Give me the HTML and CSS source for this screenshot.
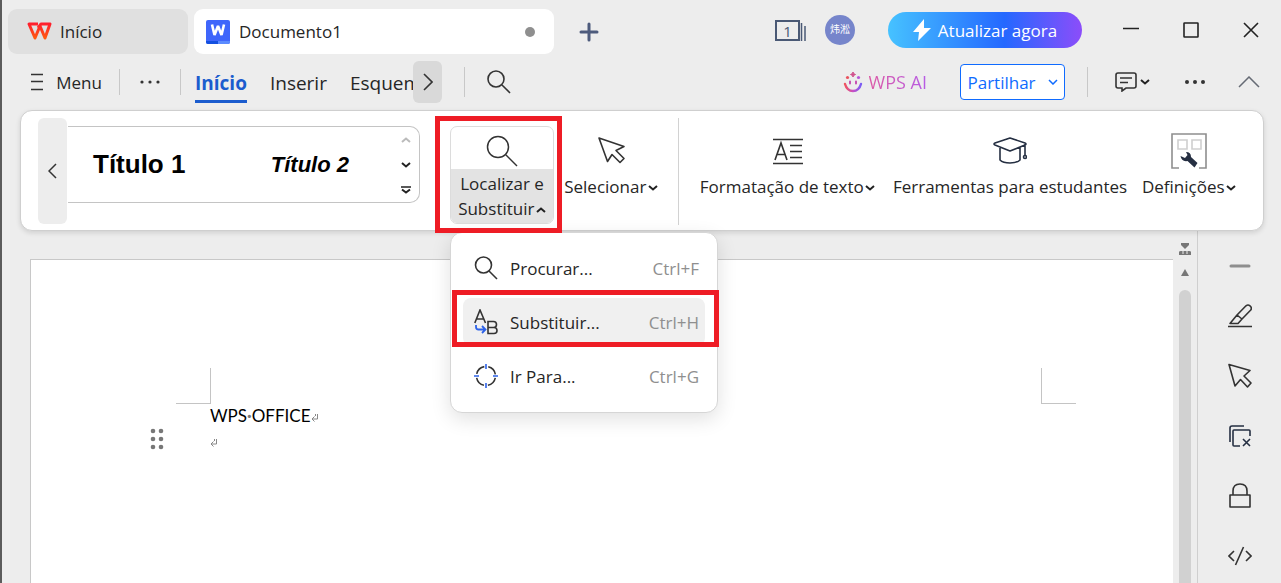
FILE: index.html
```html
<!DOCTYPE html>
<html lang="pt">
<head>
  <meta charset="UTF-8" />
  <meta name="viewport" content="width=device-width, initial-scale=1.0" />
  <title>Documento1 - WPS Office</title>
  <link rel="stylesheet" href="styles.css">
</head>
<body>

  <!-- Title bar -->
  <header class="title-bar">
    <button class="doc-tab home-tab">
      <svg width="26" height="20" viewBox="0 0 26 20"><defs><linearGradient id="wps" x1="0" y1="0" x2="0" y2="1"><stop offset="0" stop-color="#ff1f2d"/><stop offset="1" stop-color="#ff5a10"/></linearGradient></defs><path d="M12 2H3l6 14 5-12 5 12 5-14h-9l-3 4" fill="none" stroke="url(#wps)" stroke-width="3" stroke-linejoin="round"/></svg>
      <span>Início</span>
    </button>
    <button class="doc-tab active">
      <svg width="24" height="24" viewBox="0 0 24 24"><rect width="24" height="24" rx="2" fill="#3f66fb"/><path d="M0 21h12v3H2a2 2 0 0 1-2-2z" fill="#1450e0"/><path d="M12 21h12v1a2 2 0 0 1-2 2H12z" fill="#5b8bff"/><path d="M6 4.500L8.500 15 12 6l3.500 9L18 4.500" fill="none" stroke="#fff" stroke-width="2.600" stroke-linejoin="bevel"/></svg>
      <span>Documento1</span>
      <i class="unsaved"></i>
    </button>
    <button class="new-tab" aria-label="Novo separador">
      <svg width="20" height="20" viewBox="0 0 20 20"><path d="M10 2v16M2 10h16" stroke="#4d5b7c" stroke-width="3" stroke-linecap="round"/></svg>
    </button>
    <button class="windows-count" aria-label="Janelas">
      <span>1</span>
      <svg width="6" height="21" viewBox="0 0 6 21"><path d="M1.500 3v18M5 6v15" stroke="#4a5975" stroke-width="1.500"/></svg>
    </button>
    <span class="avatar">炜淞</span>
    <button class="upgrade">
      <svg width="18" height="22" viewBox="0 0 18 22"><path d="M11 0L0 13h6l-1 9L18 9h-7z" fill="#fff"/></svg>
      Atualizar agora
    </button>
    <div class="window-controls">
      <button aria-label="Minimizar"><svg width="16" height="16" viewBox="0 0 16 16"><path d="M0 6.500h16" stroke="#222" stroke-width="1.500"/></svg></button>
      <button aria-label="Maximizar"><svg width="16" height="16" viewBox="0 0 16 16"><rect x="1" y="1" width="14" height="14" rx="0.500" fill="none" stroke="#222" stroke-width="1.600"/></svg></button>
      <button aria-label="Fechar"><svg width="16" height="16" viewBox="0 0 16 16"><path d="M1 1l14 14M15 1L1 15" stroke="#222" stroke-width="1.600"/></svg></button>
    </div>
  </header>

  <!-- Menu bar -->
  <div class="menu-bar">
    <button class="menu-btn">
      <svg width="14" height="18" viewBox="0 0 14 18"><path d="M1 1.500h12M1 8.500h12M1 16.500h12" stroke="#333" stroke-width="1.500"/></svg>
      Menu
    </button>
    <i class="divider"></i>
    <button class="dots" aria-label="Mais"><svg width="20" height="6" viewBox="0 0 20 6"><g fill="#333"><circle cx="2" cy="3" r="1.600"/><circle cx="10" cy="3" r="1.600"/><circle cx="18" cy="3" r="1.600"/></g></svg></button>
    <i class="divider"></i>
    <nav class="ribbon-tabs">
      <a href="#" class="active">Início</a>
      <a href="#">Inserir</a>
      <a href="#">Esquem</a>
    </nav>
    <button class="tabs-next" aria-label="Seguinte"><svg width="10" height="18" viewBox="0 0 10 18"><path d="M1 1l8 8-8 8" fill="none" stroke="#333" stroke-width="1.600"/></svg></button>
    <i class="divider tall"></i>
    <button class="search-btn" aria-label="Procurar"><svg width="24" height="24" viewBox="0 0 24 24"><g fill="none" stroke="#333" stroke-width="1.600"><circle cx="9" cy="9" r="8"/><path d="M15 15l8 8"/></g></svg></button>

    <button class="wps-ai">
      <svg width="20" height="22" viewBox="0 0 20 22"><defs><linearGradient id="ai"><stop offset="0" stop-color="#f0525e"/><stop offset="0.500" stop-color="#c750c4"/><stop offset="1" stop-color="#7a5cf5"/></linearGradient></defs><path d="M2 13q2 7 8 7t8-7" fill="none" stroke="url(#ai)" stroke-width="2.400" stroke-linecap="round"/><path d="M7 10.500v2M13 10.500v2" stroke="#c750b4" stroke-width="2" stroke-linecap="round"/><path d="M10 1l.8 1.700L12.500 3.500l-1.700.8L10 6l-.8-1.700-1.700-.8 1.700-.8z" fill="#d0508c" stroke="#d0508c"/><circle cx="4.500" cy="6.500" r="1.600" fill="#e8525e"/><circle cx="15.500" cy="6.500" r="1.600" fill="#b758d8"/></svg>
      <span>WPS AI</span>
    </button>
    <button class="share">
      Partilhar
      <svg width="10" height="6" viewBox="0 0 10 6"><path d="M1 1l4 4 4-4" fill="none" stroke="#0f6bff" stroke-width="1.500"/></svg>
    </button>
    <i class="divider tall"></i>
    <button class="comments" aria-label="Comentários">
      <svg width="22" height="20" viewBox="0 0 22 20"><path d="M3 1h16a2 2 0 0 1 2 2v11a2 2 0 0 1-2 2h-8l-4 3v-3H3a2 2 0 0 1-2-2V3a2 2 0 0 1 2-2zM5 6h12M5 10.500h8" fill="none" stroke="#333" stroke-width="1.600"/></svg>
      <svg width="10" height="6" viewBox="0 0 10 6"><path d="M1 1l4 3.500L9 1" fill="none" stroke="#222" stroke-width="2"/></svg>
    </button>
    <button class="more" aria-label="Mais opções"><svg width="20" height="6" viewBox="0 0 20 6"><g fill="#333"><circle cx="2" cy="3" r="2"/><circle cx="10" cy="3" r="2"/><circle cx="18" cy="3" r="2"/></g></svg></button>
    <button class="collapse" aria-label="Recolher friso"><svg width="22" height="12" viewBox="0 0 22 12"><path d="M1 11L11 1l10 10" fill="none" stroke="#666b75" stroke-width="1.500"/></svg></button>
  </div>

  <!-- Ribbon -->
  <section class="ribbon">
    <button class="ribbon-prev" aria-label="Anterior"><svg width="9" height="16" viewBox="0 0 9 16"><path d="M8 1L1 8l7 7" fill="none" stroke="#333" stroke-width="1.500"/></svg></button>
    <div class="styles-gallery">
      <button class="style-one">Título 1</button>
      <button class="style-two">Título 2</button>
      <div class="gallery-scroll">
        <button aria-label="Acima"><svg width="10" height="6" viewBox="0 0 10 6"><path d="M1 5l4-3.500L9 5" fill="none" stroke="#bbb" stroke-width="2"/></svg></button>
        <button aria-label="Abaixo"><svg width="10" height="6" viewBox="0 0 10 6"><path d="M1 1l4 3.500L9 1" fill="none" stroke="#222" stroke-width="2"/></svg></button>
        <button aria-label="Todos os estilos"><svg width="10" height="8" viewBox="0 0 10 8"><path d="M0 1h10" stroke="#222" stroke-width="1.500"/><path d="M1 3.500l4 3 4-3" fill="none" stroke="#222" stroke-width="2"/></svg></button>
      </div>
    </div>

    <div class="find-group">
      <button class="find-btn">
        <span class="find-icon"><svg width="32" height="32" viewBox="0 0 32 32"><g fill="none" stroke="#333" stroke-width="1.500"><circle cx="12" cy="12" r="10.500"/><path d="M19.500 19.500L31 31"/></g></svg></span>
        <span class="find-label">Localizar e<br>Substituir <svg width="10" height="6" viewBox="0 0 10 6"><path d="M1 5l4-3.500L9 5" fill="none" stroke="#222" stroke-width="2"/></svg></span>
      </button>
      <i class="mark mark-group"></i>

      <!-- Dropdown -->
      <div class="dropdown">
        <button class="option">
          <svg width="24" height="24" viewBox="0 0 24 24"><g fill="none" stroke="#333" stroke-width="1.600"><circle cx="9.500" cy="9" r="8"/><path d="M15 15l8 8"/></g></svg>
          <span>Procurar...</span><kbd>Ctrl+F</kbd>
        </button>
        <button class="option selected">
          <svg width="24" height="26" viewBox="0 0 24 26"><g fill="none" stroke="#333" stroke-width="1.600"><path d="M.8 14L6 1l5.500 13M2.500 10h7"/><path d="M14 12.500h5.500a3 3 0 0 1 0 6H14zM14 18.500h6a3 3 0 0 1 0 6h-6z"/></g><path d="M2 16v2a2.500 2.500 0 0 0 2.500 2.500H11M8 17l3.500 3.500L8 24" fill="none" stroke="#2d62e8" stroke-width="1.800"/></svg>
          <span>Substituir...</span><kbd>Ctrl+H</kbd>
          <i class="mark mark-option"></i>
        </button>
        <button class="option">
          <svg width="24" height="24" viewBox="0 0 24 24"><circle cx="12" cy="12" r="9.500" fill="none" stroke="#333" stroke-width="1.600" stroke-dasharray="10.900 4.020" stroke-dashoffset="-2"/><path d="M12 0v5M12 19v5M0 12h5M19 12h5" stroke="#2d62e8" stroke-width="1.600"/></svg>
          <span>Ir Para...</span><kbd>Ctrl+G</kbd>
        </button>
      </div>
    </div>

    <button class="tool select-tool">
      <svg width="30" height="32" viewBox="0 0 30 32"><path d="M3 3l25 8.500-8 4 8 8-4 4-8-8-4.500 7z" fill="none" stroke="#333" stroke-width="1.600" stroke-linejoin="round"/></svg>
      <span>Selecionar <svg width="10" height="6" viewBox="0 0 10 6"><path d="M1 1l4 3.500L9 1" fill="none" stroke="#222" stroke-width="2"/></svg></span>
    </button>
    <i class="ribbon-divider"></i>
    <button class="tool format-tool">
      <svg width="30" height="32" viewBox="0 0 30 32"><path d="M0 4.500h30M0 28.500h30M17 10.500h12M17 16.500h12M17 22.500h12M2 25L8 8l6 17M4 19.500h8" fill="none" stroke="#333" stroke-width="1.600"/></svg>
      <span>Formatação de texto <svg width="10" height="6" viewBox="0 0 10 6"><path d="M1 1l4 3.500L9 1" fill="none" stroke="#222" stroke-width="2"/></svg></span>
    </button>
    <button class="tool student-tool">
      <svg width="34" height="32" viewBox="0 0 34 32"><g fill="none" stroke="#252f42" stroke-width="1.600" stroke-linejoin="round"><path d="M17 3l15 5q2 1 0 2l-15 6L2 10q-2-1 0-2zM7 12v13q3 3 10 3t10-3V12M32 9v11"/><circle cx="32" cy="22" r="1.500"/></g></svg>
      <span>Ferramentas para estudantes</span>
    </button>
    <button class="tool settings-tool">
      <svg width="36" height="36" viewBox="0 0 36 36"><g fill="none" stroke="#8e8e8e" stroke-width="1.600"><path d="M8 35H1V1h34v34h-7"/><path d="M7 7h9v9H7zM21 7h9v9h-9z" stroke="#cfcfcf"/></g><path d="M15 19q5 0 5 5l6.500 6-3 4.500-7-6.500q-6 1-7-5l4.500 2 2.500-3z" fill="#252f42"/></svg>
      <span>Definições <svg width="10" height="6" viewBox="0 0 10 6"><path d="M1 1l4 3.500L9 1" fill="none" stroke="#222" stroke-width="2"/></svg></span>
    </button>
  </section>

  <!-- Document -->
  <main class="workspace">
    <article class="paper">
      <svg class="drag-handle" width="14" height="22" viewBox="0 0 14 22"><g fill="#777"><circle cx="3" cy="3" r="2.300"/><circle cx="11" cy="3" r="2.300"/><circle cx="3" cy="11" r="2.300"/><circle cx="11" cy="11" r="2.300"/><circle cx="3" cy="19" r="2.300"/><circle cx="11" cy="19" r="2.300"/></g></svg>
      <div class="margins">
        <i class="corner corner-left"></i>
        <i class="corner corner-right"></i>
      </div>
      <div class="doc-text">
        <p>WPS<span class="space-dot">·</span>OFFICE<svg width="8" height="8" viewBox="0 0 8 8"><path d="M6.500 0v5H1M3.500 2.500L1 5l2.500 2.500M4.500 0v2" fill="none" stroke="#888"/></svg></p>
        <p><svg width="8" height="8" viewBox="0 0 8 8"><path d="M6.500 0v5H1M3.500 2.500L1 5l2.500 2.500M4.500 0v2" fill="none" stroke="#888"/></svg></p>
      </div>
    </article>

    <div class="scrollbar">
      <svg width="12" height="12" viewBox="0 0 12 12"><path d="M2 0h8v2L6 6 2 2zM0 12V9q0-1 2-1h8q2 0 2 1v3z" fill="#777"/><path d="M4 8v3M8 8v3" stroke="#eee"/></svg>
      <svg width="8" height="7" viewBox="0 0 8 7"><path d="M4 0l4 7H0z" fill="#777"/></svg>
      <i class="thumb"></i>
    </div>

    <aside class="side-bar">
      <button class="side-min" aria-label="Minimizar painel"><svg width="22" height="4" viewBox="0 0 22 4"><path d="M2 2h18" stroke="#8e8e8e" stroke-width="3" stroke-linecap="round"/></svg></button>
      <button aria-label="Editar"><svg width="24" height="24" viewBox="0 0 24 24"><g fill="none" stroke="#333" stroke-width="1.600" stroke-linejoin="round"><path d="M0 22.500h24M2 19.500L9 11 18 1.800q2-1.500 4 0t1 4L14 15l-4 4.500zM9 11l5 4"/></g></svg></button>
      <button aria-label="Selecionar"><svg width="24" height="26" viewBox="0 0 24 26"><path d="M1 1.500l21 6-6 5.500 7 7-3.500 4-7-7.500L7 23z" fill="none" stroke="#333" stroke-width="1.600" stroke-linejoin="round"/></svg></button>
      <button aria-label="Limpar"><svg width="22" height="22" viewBox="0 0 22 22"><g fill="none" stroke="#252f42" stroke-width="1.600"><path d="M1 17V3q0-2 2-2h12M11 21H5q-1 0-1-1V6q0-1 1-1h15q1 0 1 1v5M14 14l7 7M21 14l-7 7"/></g></svg></button>
      <button aria-label="Proteger"><svg width="22" height="26" viewBox="0 0 22 26"><path d="M1 12h20v12H1zM4 12V8q0-7 7-7t7 7v4" fill="none" stroke="#333" stroke-width="1.600" stroke-linejoin="round"/></svg></button>
      <button aria-label="Código"><svg width="24" height="20" viewBox="0 0 24 20"><path d="M6 5l-5 5 5 5M18 5l5 5-5 5M15.500 1l-8 18" fill="none" stroke="#333" stroke-width="1.600"/></svg></button>
    </aside>
  </main>

</body>
</html>
```
FILE: styles.css
```css
* {
  margin: 0;
  padding: 0;
  box-sizing: border-box;
}

body {
  height: 100vh;
  display: flex;
  flex-direction: column;
  overflow: hidden;
  background: #ededed;
  border-left: 2px solid #5c5c5c;
  color: #262626;
  font-family: 'Open Sans', 'Noto Sans', 'Noto Sans CJK SC', sans-serif;
  font-size: 17px;
}

button {
  display: flex;
  align-items: center;
  justify-content: center;
  flex-shrink: 0;
  border: none;
  background: none;
  color: inherit;
  font: inherit;
  white-space: nowrap;
  cursor: pointer;
}

svg {
  flex-shrink: 0;
}

/* ========== Title bar ========== */
.title-bar {
  display: flex;
  align-items: center;
  height: 60px;
  padding: 3px 0 0 6px;
}

.doc-tab {
  height: 45px;
  border-radius: 9px;
  justify-content: flex-start;
}

.home-tab {
  width: 180px;
  padding-left: 18px;
  gap: 8px;
  background: #e0e0e0;
}

.doc-tab.active {
  width: 360px;
  margin-left: 6px;
  padding: 0 19px 0 12px;
  gap: 9px;
  background: #fff;
}

.unsaved {
  width: 10px;
  height: 10px;
  margin-left: auto;
  border-radius: 50%;
  background: #8f8f8f;
}

.new-tab {
  width: 40px;
  height: 40px;
  margin-left: 15px;
  margin-right: auto;
}

/* everything right of the tabs sits a little higher */
.windows-count,
.avatar,
.upgrade,
.window-controls {
  margin-bottom: 3px;
}

.windows-count {
  margin-right: 19px;
}

.windows-count span {
  width: 25px;
  height: 21px;
  border: 2px solid #4a5975;
  color: #4a5975;
  font-size: 15px;
  line-height: 18px;
}

.avatar {
  width: 30px;
  height: 30px;
  margin-right: 33px;
  border-radius: 50%;
  background: #7685cb;
  color: #fff;
  font-size: 10px;
  line-height: 29px;
  text-align: center;
}

.upgrade {
  width: 194px;
  height: 36px;
  gap: 7px;
  margin-right: 19px;
  border-radius: 18px;
  background: linear-gradient(90deg, #46c2ff, #2468ff 60%, #8c4dfa);
  color: #fff;
}

.window-controls {
  display: flex;
}

.window-controls button {
  width: 60px;
  height: 36px;
}

/* ========== Menu bar ========== */
.menu-bar {
  display: flex;
  align-items: center;
  height: 44px;
  margin-bottom: 6px;
  padding: 0 21px 0 28px;
}

.menu-btn {
  width: 72px;
  gap: 12px;
}

.divider {
  width: 1px;
  height: 26px;
  margin: 0 17px;
  background: #c8c8c8;
}

.divider.tall {
  height: 30px;
  margin: 0 22px;
}

.dots {
  width: 26px;
}

.ribbon-tabs {
  display: flex;
  gap: 23px;
  width: 218px;
  overflow: hidden;
  margin-left: -3px;
}

.ribbon-tabs a {
  height: 42px;
  color: inherit;
  font-size: 19px;
  line-height: 44px;
  text-decoration: none;
}

.ribbon-tabs .active {
  border-bottom: 3px solid #1b5cce;
  color: #1b5cce;
  font-weight: bold;
}

.tabs-next {
  width: 29px;
  height: 42px;
  border-radius: 6px;
  background: #d9d9d9;
}

.wps-ai {
  gap: 6px;
  margin-left: auto;
  margin-right: 33px;
}

.wps-ai span {
  background: linear-gradient(90deg, #dc5aa6, #b65ce6);
  background-clip: text;
  color: transparent;
  font-size: 18px;
}

.share {
  width: 105px;
  height: 36px;
  gap: 12px;
  border: 1px solid #0f6bff;
  border-radius: 4px;
  background: #fff;
  color: #0f6bff;
}

.comments {
  gap: 3px;
  margin-left: 5px;
}

.more {
  margin-left: 35px;
}

.collapse {
  margin-left: 33px;
}

/* ========== Ribbon ========== */
.ribbon {
  position: relative;
  z-index: 10;
  display: flex;
  align-items: flex-start;
  height: 121px;
  margin: 0 17px 0 18px;
  padding: 7px 17px;
  border: 1px solid #cfcfcf;
  border-radius: 12px;
  background: #fff;
  box-shadow: 0 2px 5px rgba(0, 0, 0, 0.12);
}

.ribbon-prev {
  width: 29px;
  height: 106px;
  border-radius: 6px;
  background: #ededed;
}

.styles-gallery {
  display: flex;
  align-items: center;
  width: 352px;
  height: 77px;
  margin: 8px 30px 0 1px;
  padding: 0 7px 0 25px;
  border: 1px solid #c4c4c4;
  border-left: none;
  border-radius: 0 10px 10px 0;
  color: #000;
  font-family: 'Liberation Sans', sans-serif;
  font-weight: bold;
}

.style-one {
  font-size: 26px;
  margin-right: auto;
}

.style-two {
  font-size: 22px;
  font-style: italic;
  margin-right: 51px;
}

.gallery-scroll button {
  width: 12px;
  height: 25px;
}

.find-group {
  position: relative;
  margin-top: 8px;
}

.find-btn {
  flex-direction: column;
  width: 104px;
  border: 1px solid #dcdcdc;
  border-radius: 7px;
  overflow: hidden;
}

.find-icon {
  display: flex;
  align-items: center;
  height: 42px;
  padding-top: 6px;
}

.find-label {
  width: 100%;
  height: 54px;
  padding-top: 2px;
  background: #e3e3e3;
  line-height: 25px;
}

.tool {
  flex-direction: column;
  margin-top: 15px;
}

.tool > svg {
  height: 36px;
}

.tool > span {
  line-height: 36px;
}

.find-label svg,
.tool span svg {
  margin-left: -3px;
  vertical-align: middle;
}

.select-tool {
  width: 94px;
  margin-left: 10px;
}

.ribbon-divider {
  width: 1px;
  height: 107px;
  margin: 0 auto 0 20px;
  background: #d2d2d2;
}

.format-tool {
  width: 177px;
}

.student-tool {
  width: 228px;
  margin-left: 20px;
  margin-right: 17px;
}

.settings-tool {
  width: 96px;
  margin-right: 9px;
}

/* ========== Dropdown ========== */
.dropdown {
  position: absolute;
  top: 106px;
  left: 0;
  width: 268px;
  padding: 5px 12px 6px;
  border: 1px solid #d6d6d6;
  border-radius: 12px;
  background: #fff;
  box-shadow: 0 6px 20px rgba(0, 0, 0, 0.12);
}

.option {
  position: relative;
  width: 100%;
  height: 48px;
  margin: 6px 0;
  padding: 0 6px 0 11px;
  gap: 12px;
  border-radius: 8px;
}

.option.selected {
  background: #f0f0f0;
}

.option kbd {
  margin-left: auto;
  color: #8f8f8f;
  font: inherit;
}

/* red frames round the steps */
.mark {
  position: absolute;
  z-index: 2;
  border: 5px solid #ee1c25;
  pointer-events: none;
}

.mark-group {
  inset: -10px -8px -9px -15px;
}

.mark-option {
  inset: -8px -14px -1px -11px;
}

/* ========== Document ========== */
.workspace {
  display: flex;
  flex: 1;
  min-height: 0;
}

.paper {
  position: relative;
  flex: 1;
  margin: 28px 0 0 28px;
  padding: 108px 97px 0 145px;
  border-top: 1px solid #c8c8c8;
  border-left: 1px solid #c8c8c8;
  background: #fff;
}

.margins {
  display: flex;
  justify-content: space-between;
}

.corner {
  width: 35px;
  height: 36px;
  border-bottom: 1px solid #c4c4c4;
}

.corner-left {
  border-right: 1px solid #c4c4c4;
}

.corner-right {
  border-left: 1px solid #c4c4c4;
}

.doc-text {
  padding-left: 34px;
  color: #000;
  font-family: Lato, sans-serif;
  font-size: 17px;
  line-height: 24px;
}

.doc-text p {
  height: 25px;
}

.space-dot {
  color: #777;
  font-weight: bold;
}

.drag-handle {
  position: absolute;
  left: 119px;
  top: 168px;
}

.scrollbar {
  display: flex;
  flex-direction: column;
  align-items: center;
  width: 24px;
  padding-top: 12px;
  gap: 14px;
}

.thumb {
  flex: 1;
  width: 12px;
  border-radius: 6px 6px 0 0;
  background: #d1d1d1;
}

.side-bar {
  width: 84px;
  padding-top: 15px;
  border-left: 1px solid #cfcfcf;
}

.side-bar button {
  width: 100%;
  height: 60px;
}

.side-bar .side-min {
  height: 40px;
}
```
